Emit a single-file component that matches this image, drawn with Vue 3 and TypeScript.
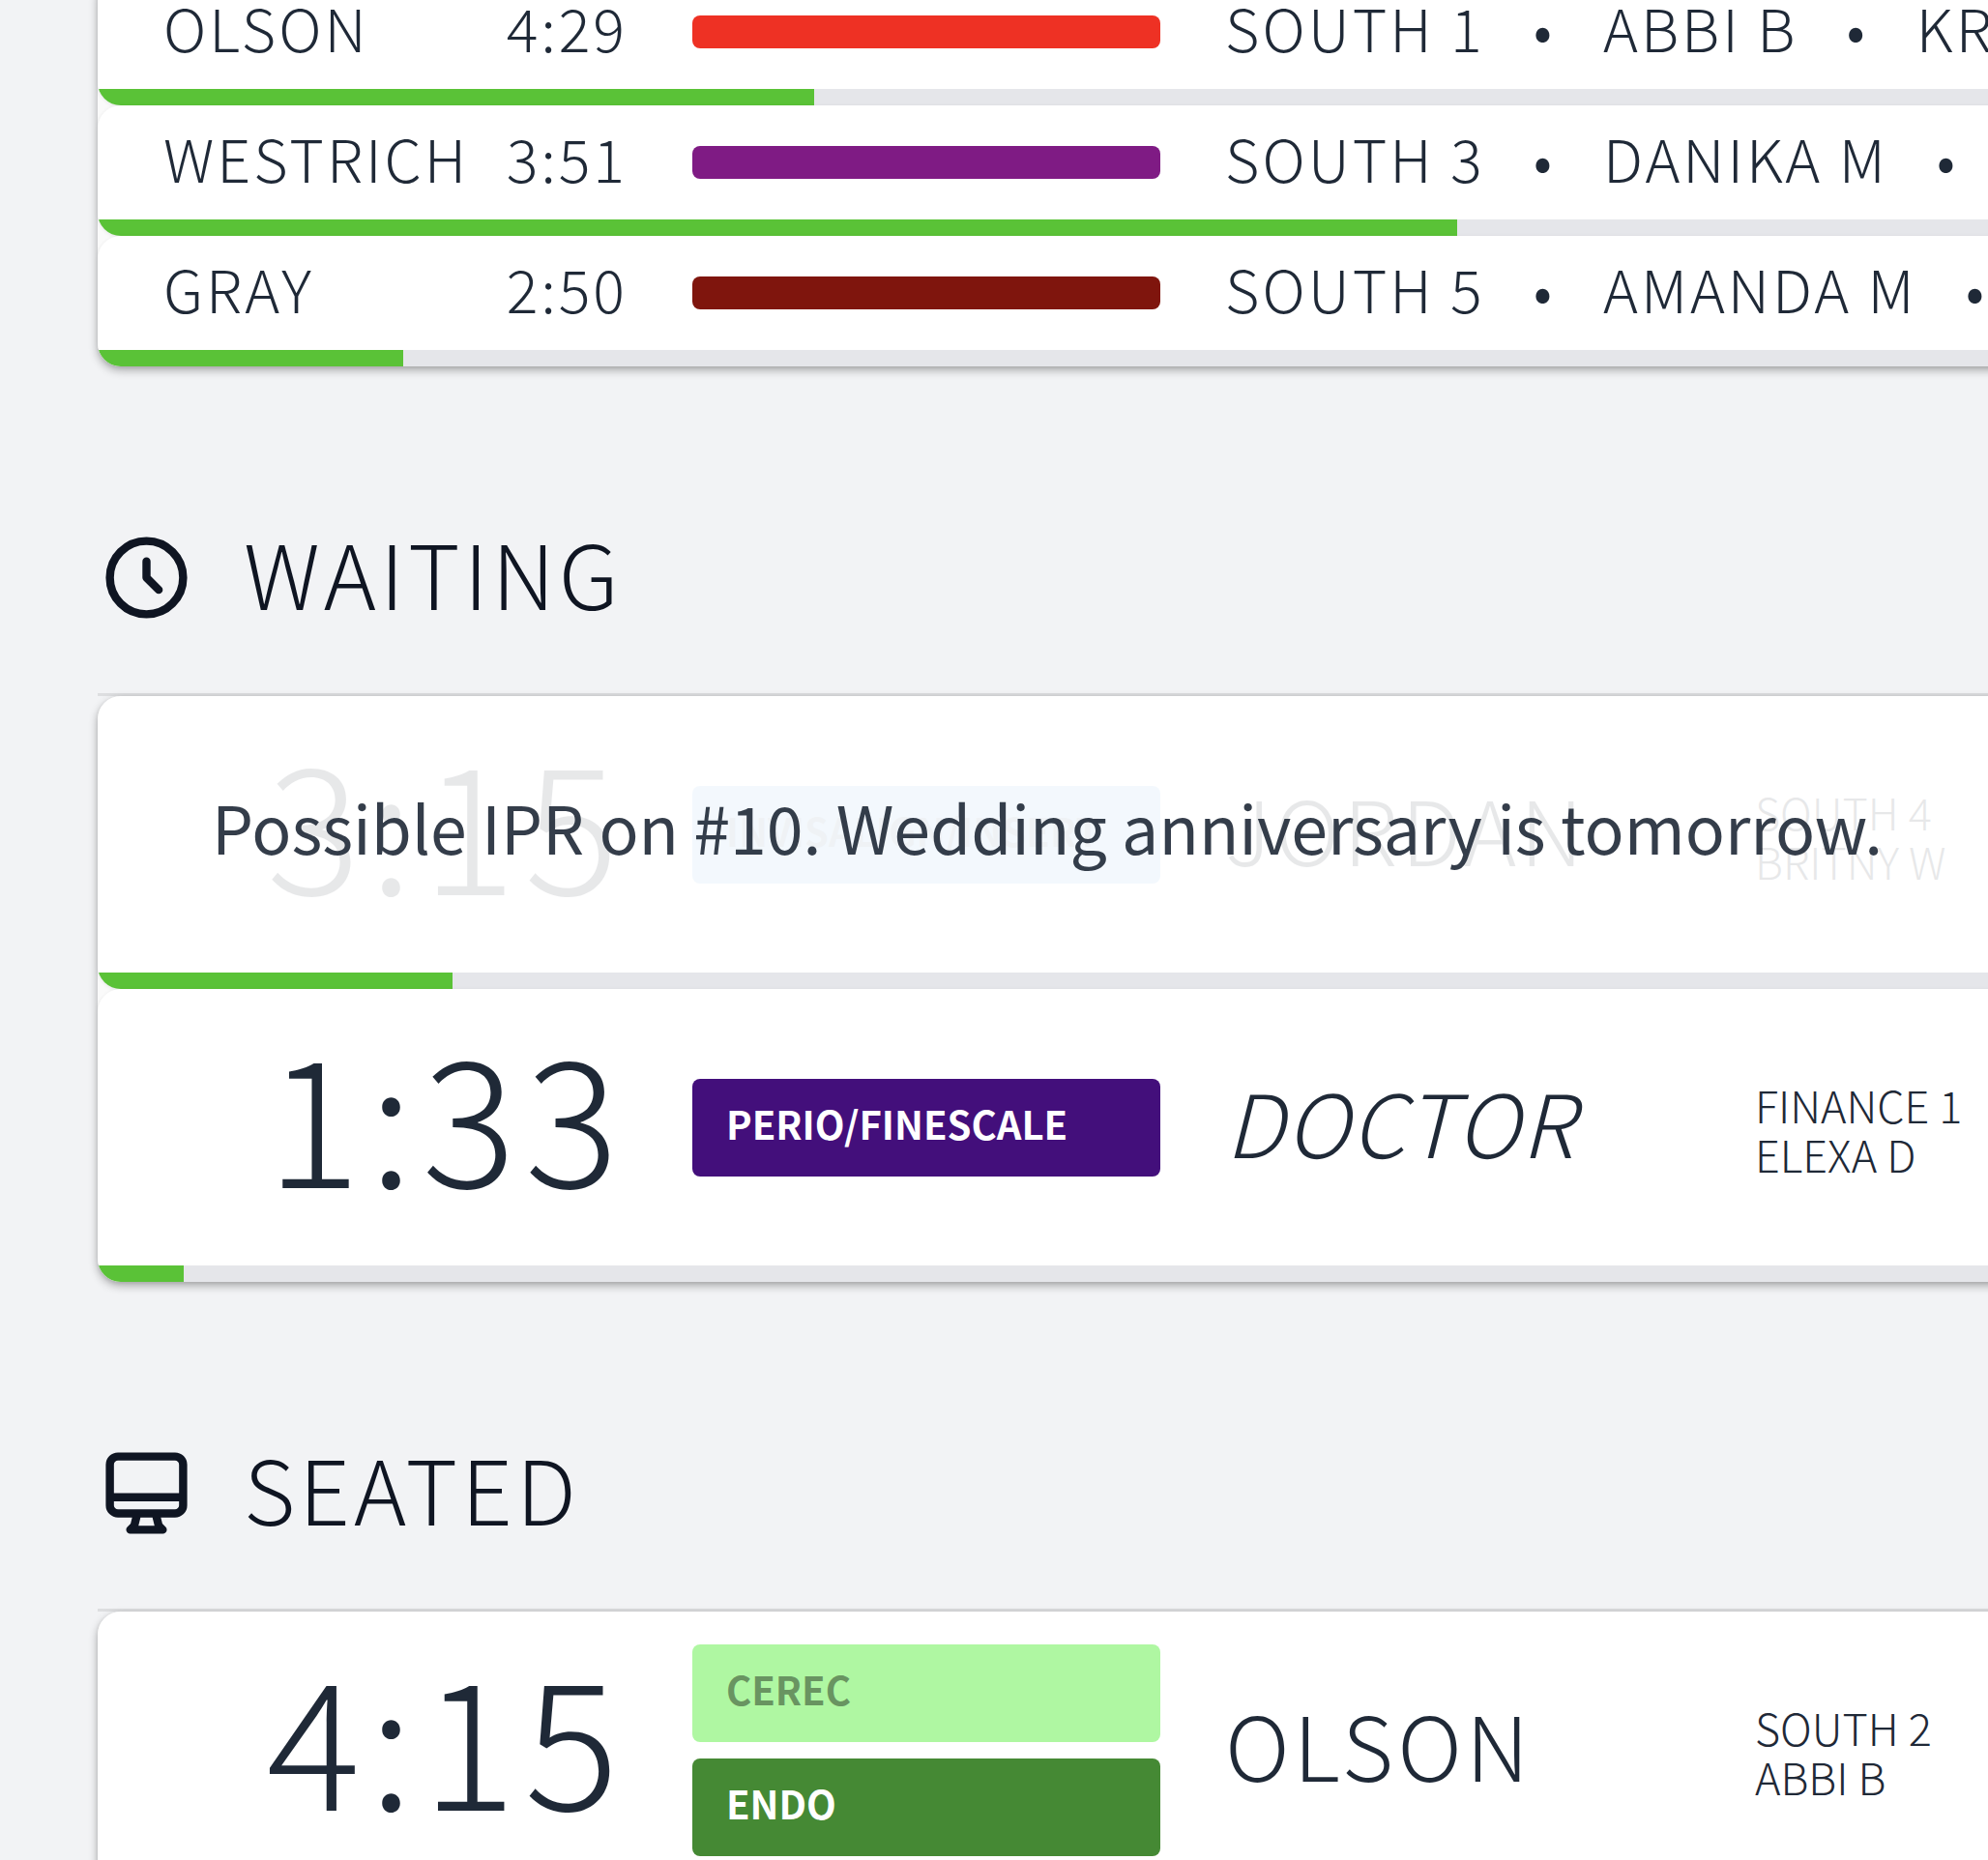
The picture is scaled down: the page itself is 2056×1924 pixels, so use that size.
<script setup lang="ts">
interface Chip {
  label: string
  background: string
  color: string
}

interface CompactRow {
  name: string
  time: string
  color: string
  progress: number
  details: string[]
}

interface Visit {
  time: string
  name: string
  chair: string
  assistant: string
  progress: number
  chips: Chip[]
  italic?: boolean
  note?: string
}

interface Section {
  id: string
  title: string
  icon: string
  visits: Visit[]
}

const arriving: CompactRow[] = [
  { name: 'OLSON', time: '4:29', color: '#ee3124', progress: 37.5, details: ['SOUTH 1', 'ABBI B', 'KR'] },
  { name: 'WESTRICH', time: '3:51', color: '#7f1b84', progress: 71.2, details: ['SOUTH 3', 'DANIKA M', ''] },
  { name: 'GRAY', time: '2:50', color: '#7f150d', progress: 16, details: ['SOUTH 5', 'AMANDA M', ''] },
]

const sections: Section[] = [
  {
    id: 'waiting',
    title: 'WAITING',
    icon: 'M12 8v4l3 3m6-3a9 9 0 11-18 0 9 9 0 0118 0z',
    visits: [
      {
        time: '3:15',
        name: 'JORDAN',
        chair: 'SOUTH 4',
        assistant: 'BRITNY W',
        progress: 18.6,
        chips: [{ label: 'INVISALIGN/INSERT', background: '#91c6f5', color: '#6d8ba4' }],
        note: 'Possible IPR on #10. Wedding anniversary is tomorrow.',
      },
      {
        time: '1:33',
        name: 'DOCTOR',
        chair: 'FINANCE 1',
        assistant: 'ELEXA D',
        progress: 4.5,
        chips: [{ label: 'PERIO/FINESCALE', background: '#430f7b', color: '#ffffff' }],
        italic: true,
      },
    ],
  },
  {
    id: 'seated',
    title: 'SEATED',
    icon: 'M9.75 17L9 20l-1 1h8l-1-1-.75-3M3 13h18M5 17h14a2 2 0 002-2V5a2 2 0 00-2-2H5a2 2 0 00-2 2v10a2 2 0 002 2z',
    visits: [
      {
        time: '4:15',
        name: 'OLSON',
        chair: 'SOUTH 2',
        assistant: 'ABBI B',
        progress: 30,
        chips: [
          { label: 'CEREC', background: '#aff7a2', color: '#699461' },
          { label: 'ENDO', background: '#458934', color: '#ffffff' },
        ],
      },
    ],
  },
]
</script>

<template>
  <main class="board">
    <ul class="list first">
      <li v-for="row in arriving" :key="row.name" class="card">
        <div class="row compact">
          <div class="who">
            <span>{{ row.name }}</span>
            <span>{{ row.time }}</span>
          </div>
          <div class="swatch" :style="{ background: row.color }"></div>
          <div class="details">
            <template v-for="(detail, i) in row.details" :key="i">
              <span v-if="i > 0">•</span>
              <span>{{ detail }}</span>
            </template>
          </div>
        </div>
        <div class="track"><div class="fill" :style="{ width: row.progress + '%' }"></div></div>
      </li>
    </ul>

    <section v-for="section in sections" :key="section.id" :aria-labelledby="section.id">
      <header class="heading">
        <svg class="icon" viewBox="0 0 24 24" fill="none" stroke="currentColor" stroke-width="2" stroke-linecap="round" stroke-linejoin="round" aria-hidden="true">
          <path :d="section.icon" />
        </svg>
        <h2 :id="section.id">{{ section.title }}</h2>
      </header>
      <ul class="list">
        <li v-for="visit in section.visits" :key="visit.time" class="card">
          <div class="row large" :class="{ faded: visit.note }">
            <div class="time">{{ visit.time }}</div>
            <div class="chips">
              <div v-for="chip in visit.chips" :key="chip.label" class="chip" :style="{ background: chip.background, color: chip.color }">
                {{ chip.label }}
              </div>
            </div>
            <div class="name" :class="{ italic: visit.italic }">{{ visit.name }}</div>
            <div class="place">
              <div>{{ visit.chair }}</div>
              <div>{{ visit.assistant }}</div>
            </div>
          </div>
          <p v-if="visit.note" class="note">{{ visit.note }}</p>
          <div class="track"><div class="fill" :style="{ width: visit.progress + '%' }"></div></div>
        </li>
      </ul>
    </section>
  </main>
</template>

<style>
body {
  margin: 0;
  background: #f2f3f5;
}
</style>

<style scoped>
.board {
  box-sizing: border-box;
  height: 100vh;
  overflow: hidden;
  padding-left: 101px;
  background: #f2f3f5;
  color: #1f2937;
  font-family: 'Noto Sans CJK JP', 'Noto Sans CJK SC', sans-serif;
  font-weight: 300;
  white-space: nowrap;
}

/* lists run past the right edge of the board */
.list {
  margin: 0 -20px 0 0;
  padding: 0;
  list-style: none;
  border-radius: 24px 0 0 24px;
  background: #fafafa;
  box-shadow: 0 4px 10px rgba(0, 0, 0, 0.3);
}

/* the board is scrolled part-way into its first row */
.first {
  margin-top: -26px;
}

.card {
  position: relative;
  overflow: hidden;
  border-radius: 24px 0 0 24px;
  background: #ffffff;
  box-shadow: 0 1px 4px rgba(0, 0, 0, 0.08);
}

.row {
  display: grid;
  align-items: center;
  column-gap: 67px;
  padding-left: 68px;
}

.compact {
  grid-template-columns: 480px 484px 1fr;
  height: 118px;
  font-size: 61px;
  line-height: 60px;
  letter-spacing: 3px;
}

.large {
  grid-template-columns: 480px 484px 481px 1fr;
  height: 286px;
}

.faded {
  opacity: 0.1;
}

.who {
  display: flex;
  justify-content: space-between;
  padding-bottom: 10px;
}

.swatch {
  height: 34px;
  border-radius: 8px;
}

.details {
  display: flex;
  gap: 50px;
  min-width: 0;
  padding-bottom: 10px;
}

.time {
  padding-bottom: 32px;
  font-size: 182px;
  line-height: 180px;
  letter-spacing: 9px;
  text-align: right;
}

.chips {
  display: flex;
  flex-direction: column;
  gap: 17px;
}

.chip {
  box-sizing: border-box;
  height: 101px;
  padding: 0 35px;
  border-radius: 8px;
  font-size: 40px;
  font-weight: 700;
  line-height: 92px;
}

.name {
  padding-bottom: 14px;
  font-size: 92px;
  line-height: 92px;
  letter-spacing: 4px;
}

.italic {
  font-size: 90px;
  font-style: italic;
  letter-spacing: 2px;
}

.place {
  padding-top: 4px;
  font-size: 45px;
  line-height: 51px;
}

.note {
  position: absolute;
  top: 0;
  left: 118px;
  margin: 0;
  font-size: 68px;
  font-weight: 400;
  line-height: 270px;
  opacity: 0.9;
}

.track {
  height: 17px;
  background: #e5e6ea;
}

.fill {
  height: 17px;
  background: #5ac237;
}

.heading {
  display: flex;
  align-items: center;
  gap: 50px;
  height: 102px;
  margin-top: 167px;
  padding-bottom: 69px;
  border-bottom: 3px solid #dddee0;
  color: #0f1522;
}

.icon {
  width: 101px;
  height: 101px;
}

h2 {
  margin: 0;
  padding-bottom: 12px;
  font-size: 92px;
  font-weight: 300;
  line-height: 92px;
  letter-spacing: 4px;
}
</style>
